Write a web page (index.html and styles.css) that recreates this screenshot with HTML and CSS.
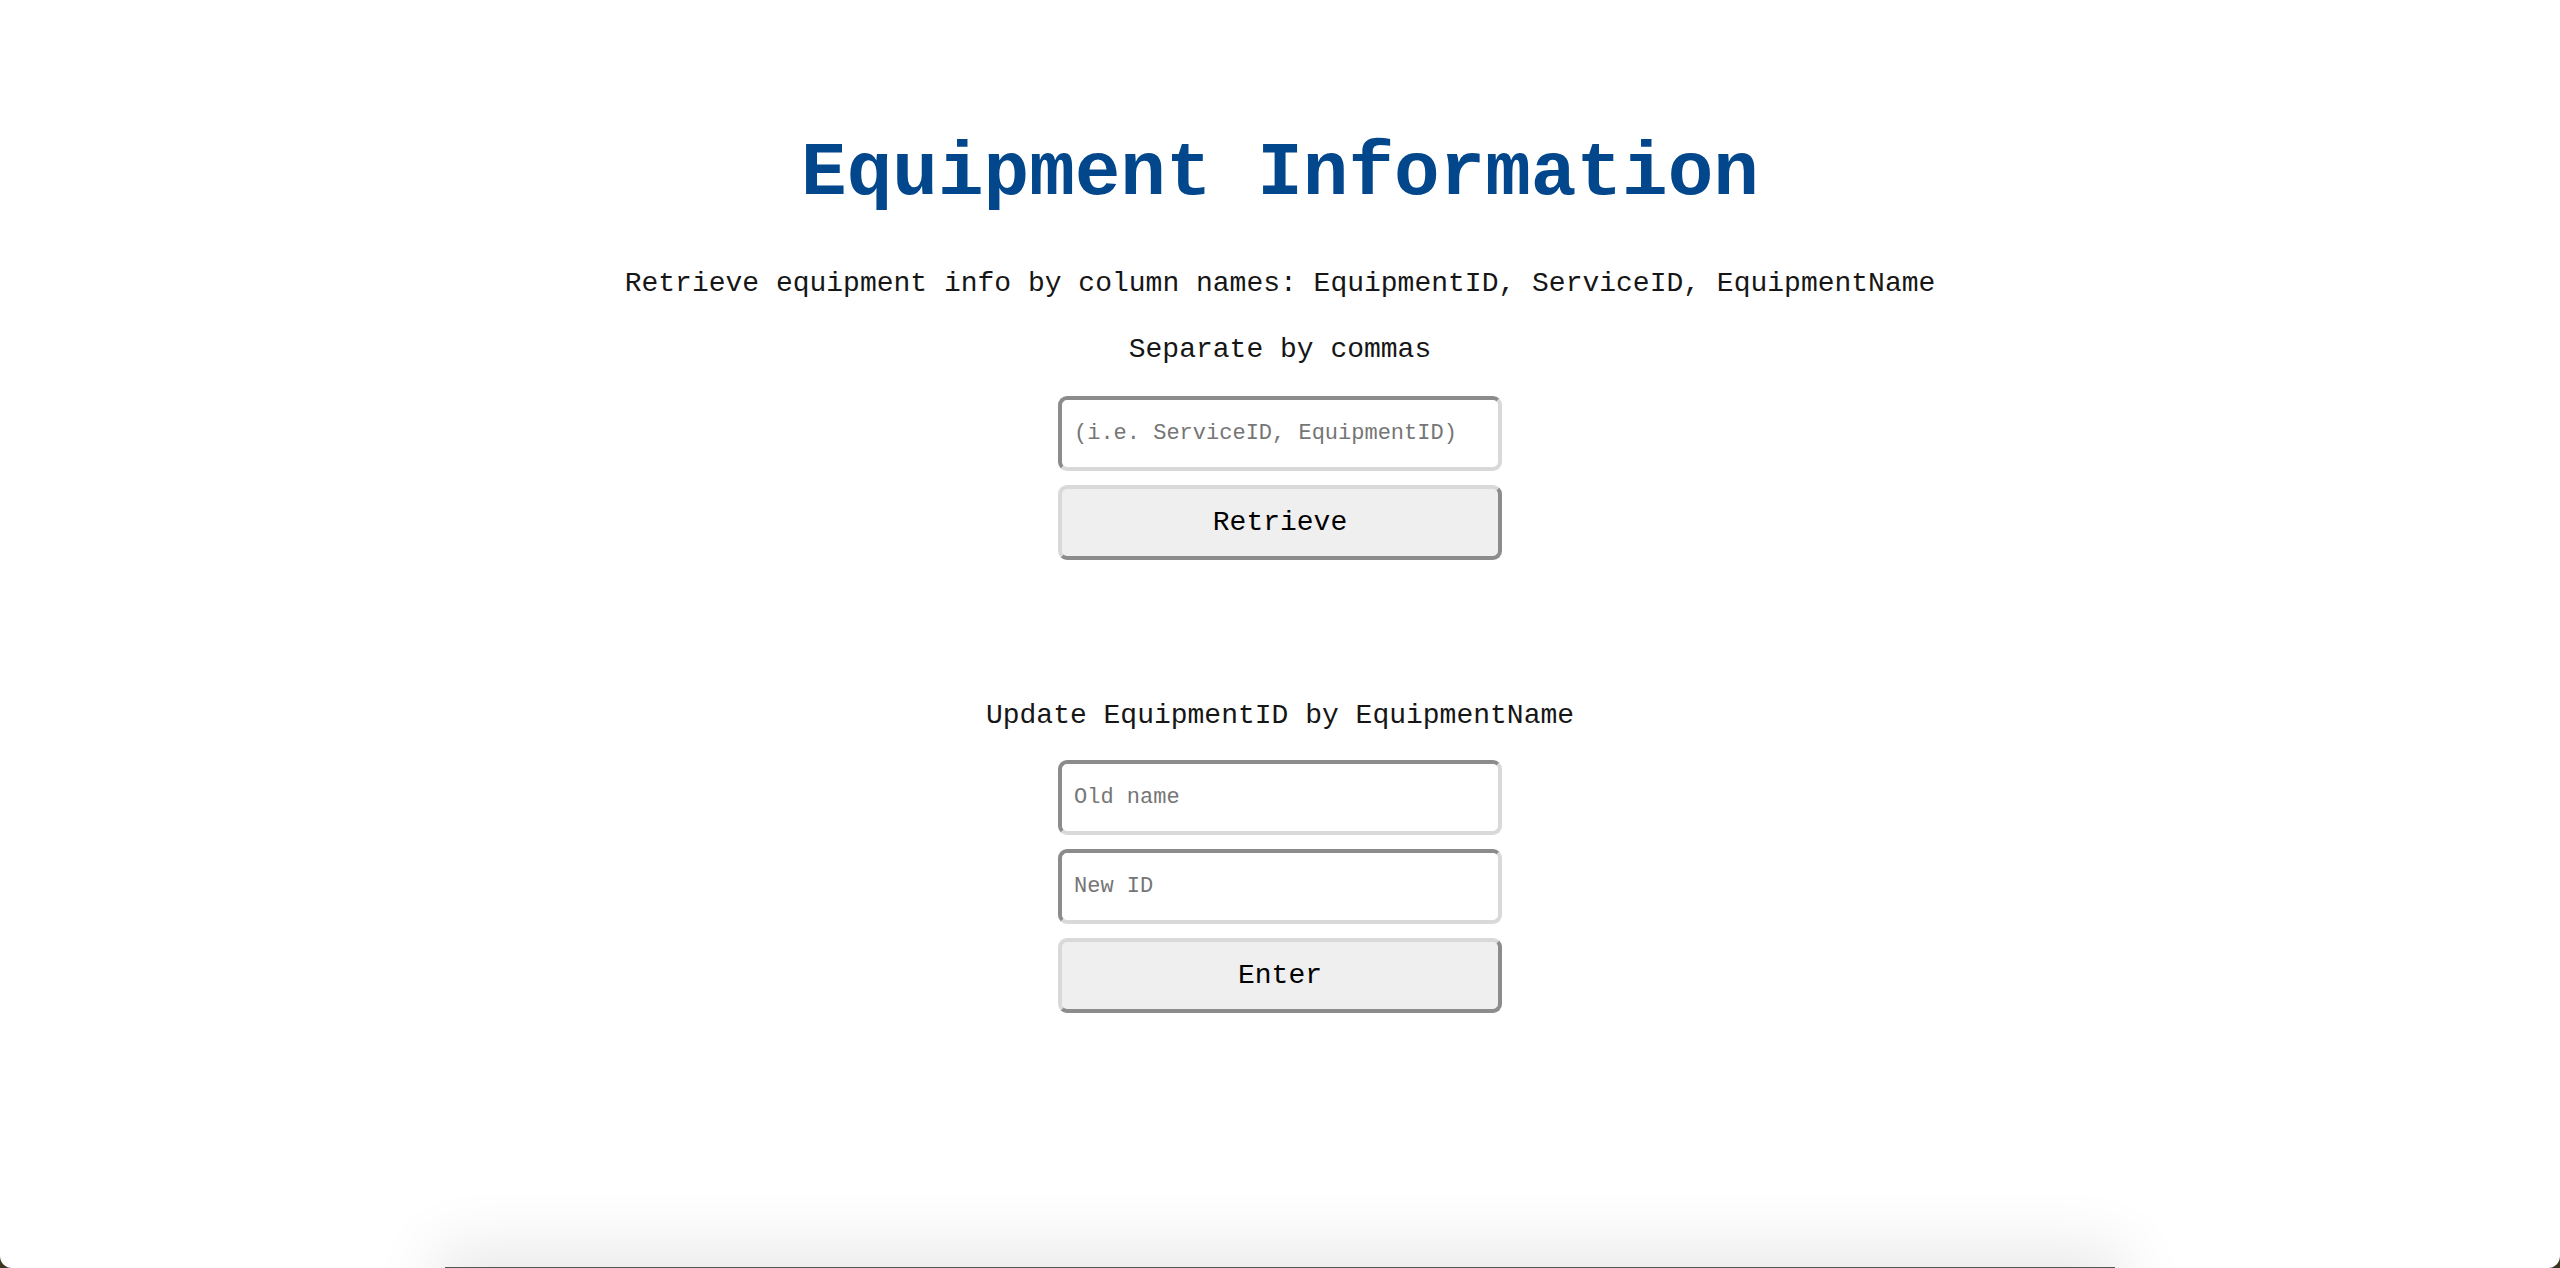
FILE: index.html
```html
<!DOCTYPE html>
<html lang="en">
<head>
<meta charset="utf-8">
<title>Equipment Information</title>
<link rel="stylesheet" href="styles.css">
</head>
<body>
<div class="window">
  <main class="page">
    <h1 class="title">Equipment Information</h1>
    <p class="text first">Retrieve equipment info by column names: EquipmentID, ServiceID, EquipmentName</p>
    <p class="text second">Separate by commas</p>
    <form class="form">
      <input class="field" type="text" placeholder="(i.e. ServiceID, EquipmentID)">
      <button class="btn" type="button">Retrieve</button>
    </form>
    <p class="text update">Update EquipmentID by EquipmentName</p>
    <form class="form form-update">
      <input class="field" type="text" placeholder="Old name">
      <input class="field" type="text" placeholder="New ID">
      <button class="btn" type="button">Enter</button>
    </form>
    <div class="results"></div>
  </main>
</div>
</body>
</html>
```

FILE: styles.css
```css
html, body {
  margin: 0;
  padding: 0;
  height: 1268px;
  overflow: hidden;
  background: #3b3421;
}

.window {
  height: 1268px;
  background: #ffffff;
  border-radius: 0 0 12px 12px;
  overflow: hidden;
}

.page {
  display: flex;
  flex-direction: column;
  align-items: center;
  font-family: "Liberation Mono", "DejaVu Sans Mono", monospace;
  color: #161616;
}

.title {
  margin: 129px 0 0;
  font-family: "Liberation Mono", "Courier New", monospace;
  font-weight: bold;
  font-size: 76px;
  line-height: 90px;
  color: #02468c;
}

.text {
  margin: 0;
  font-size: 28px;
  line-height: 34px;
}

.first { margin-top: 48px; }
.second { margin-top: 32px; }
.update { margin-top: 139px; }

.form {
  display: flex;
  flex-direction: column;
  gap: 14px;
  margin-top: 29px;
}

.form-update { margin-top: 27px; }

.field,
.btn {
  box-sizing: border-box;
  width: 444px;
  height: 75px;
  border-width: 4px;
  border-style: solid;
  border-radius: 9px;
  font-family: "Liberation Mono", "DejaVu Sans Mono", monospace;
  margin: 0;
}

.field {
  padding: 0 12px;
  font-size: 22px;
  background: #ffffff;
  border-color: #8c8c8c #d9d9d9 #d9d9d9 #8c8c8c;
  color: #222;
  outline: none;
}

.field::placeholder {
  color: #767676;
}

.btn {
  font-size: 28px;
  color: #000;
  background: #efefef;
  border-color: #d9d9d9 #8c8c8c #8c8c8c #d9d9d9;
  padding: 0;
}

.results {
  margin-top: 254px;
  width: 1670px;
  height: 200px;
  border-top: 2px solid #555;
  box-shadow: 0 -10px 60px 10px rgba(0, 0, 0, 0.09);
  background: #fff;
}
```
